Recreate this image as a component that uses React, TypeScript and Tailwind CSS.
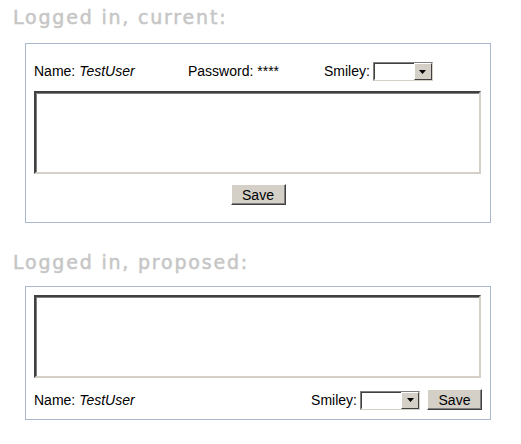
import React from "react";

function Select() {
  return (
    <div className="flex h-[19px] w-[60px] border border-t-[#808080] border-l-[#808080] border-b-[#d4d0c8] border-r-[#d4d0c8] bg-white">
      <div className="flex-1 border border-r-0 border-t-[#404040] border-l-[#404040] border-b-white" />
      <div className="flex w-[18px] items-center justify-center border border-t-white border-l-white border-b-[#404040] border-r-[#404040] bg-[#d4d0c8]">
        <svg width="7" height="4" viewBox="0 0 7 4">
          <path d="M0 0h7L3.5 4z" fill="#000" />
        </svg>
      </div>
    </div>
  );
}

function SaveButton() {
  return (
    <button className="h-[21px] w-[55px] border border-t-white border-l-white border-b-[#404040] border-r-[#404040] bg-[#d4d0c8] text-[14px] leading-none text-black shadow-[inset_-1px_-1px_0_#808080]">
      Save
    </button>
  );
}

function TextBox() {
  return (
    <div className="h-[83px] w-[447px] border-2 border-t-[#404040] border-l-[#404040] border-b-[#d4d0c8] border-r-[#d4d0c8] bg-white shadow-[inset_1px_1px_0_#808080]" />
  );
}

function Heading({ children }: { children: React.ReactNode }) {
  return (
    <h2 className="ml-[13px] text-[19px] leading-none tracking-[1.8px] text-[#c6c6c6] [font-family:'DejaVu_Sans',sans-serif] [-webkit-text-stroke:0.5px_#c6c6c6]">
      {children}
    </h2>
  );
}

export default function App() {
  return (
    <div className="h-[444px] w-[521px] bg-white pt-[8px] text-[14px] text-black [font-family:'Liberation_Sans',Arial,sans-serif]">
      <Heading>Logged in, current:</Heading>
      <div className="ml-[25px] mt-[16px] h-[180px] w-[466px] border border-[#a9b8cf] px-[8px] pt-[18px]">
        <div className="flex h-[19px] items-center">
          <span className="w-[154px]">
            Name: <i>TestUser</i>
          </span>
          <span className="w-[136px]">Password: ****</span>
          <span className="mr-[3px]">Smiley:</span>
          <Select />
        </div>
        <div className="mt-[10px]">
          <TextBox />
        </div>
        <div className="mt-[10px] flex justify-center">
          <SaveButton />
        </div>
      </div>
      <div className="mt-[30px]">
        <Heading>Logged in, proposed:</Heading>
      </div>
      <div className="ml-[25px] mt-[14px] h-[134px] w-[466px] border border-[#a9b8cf] px-[8px] pt-[8px]">
        <TextBox />
        <div className="mt-[12px] flex h-[20px] items-center">
          <span className="flex-1">
            Name: <i>TestUser</i>
          </span>
          <span className="mr-[3px]">Smiley:</span>
          <Select />
          <div className="ml-[7px]">
            <SaveButton />
          </div>
        </div>
      </div>
    </div>
  );
}
